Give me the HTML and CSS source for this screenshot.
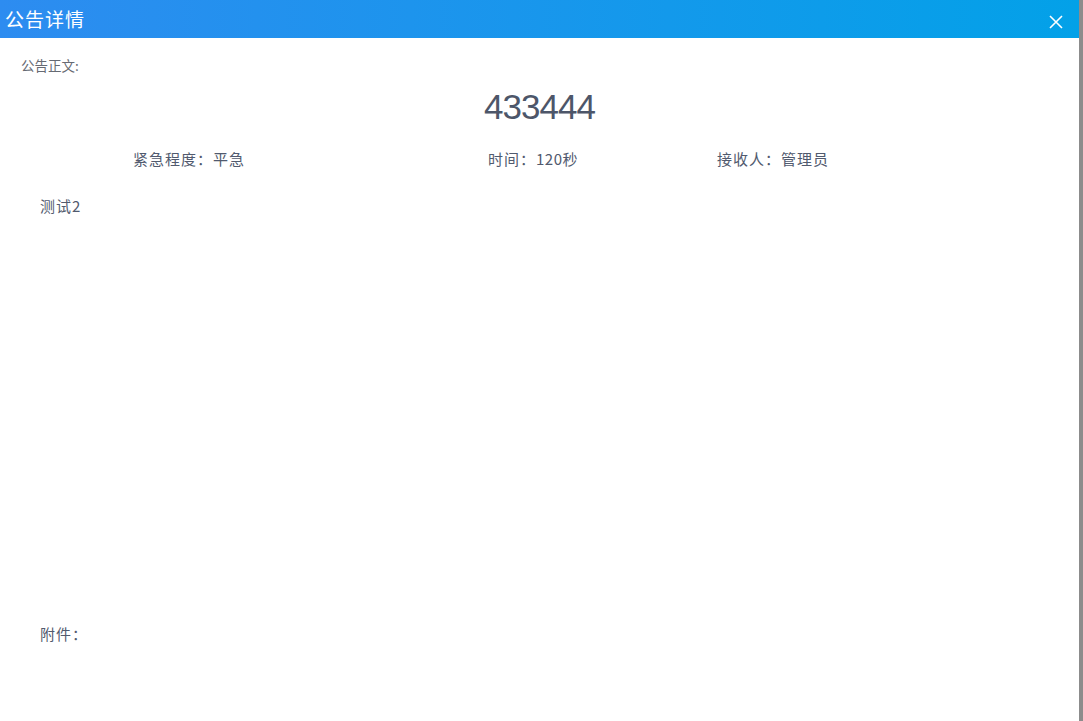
FILE: index.html
```html
<!DOCTYPE html>
<html lang="zh">
<head>
<meta charset="utf-8">
<link rel="stylesheet" href="styles.css">
</head>
<body>
<div class="modal">
  <div class="header">
    <span class="title">公告详情</span>
    <svg class="close" width="14" height="14" viewBox="0 0 14 14"><path d="M1 1L13 13M13 1L1 13" stroke="#fff" stroke-width="1.6" fill="none"/></svg>
  </div>
  <div class="body">
    <div class="label">公告正文:</div>
    <div class="headline">433444</div>
    <div class="meta">
      <span class="m1">紧急程度：平急</span>
      <span class="m2">时间：<span class="num">120</span>秒</span>
      <span class="m3">接收人：管理员</span>
    </div>
    <div class="content">测试2</div>
    <div class="attach">附件：</div>
  </div>
</div>
</body>
</html>
```
FILE: styles.css
```css
html, body { margin: 0; padding: 0; }
body {
  width: 1083px; height: 721px; overflow: hidden;
  background: #8c8c8c;
  font-family: "Noto Sans CJK SC", "Helvetica Neue", "Liberation Sans", sans-serif;
}
.modal { width: 1079px; height: 721px; background: #fff; }
.header {
  height: 38px;
  background: linear-gradient(90deg, #2d8cf0 0%, #03a1e8 100%);
  display: flex; align-items: center; justify-content: space-between;
  padding: 0 16px 0 5px;
}
.title { color: #fff; font-size: 19px; letter-spacing: 1px; line-height: 38px; }
.close { margin-top: 5px; }
.body { padding: 0; color: #515a6e; }
.label { font-size: 13.5px; color: #666a73; padding: 17px 0 0 21px; line-height: 20px; }
.headline {
  text-align: center; font-size: 35px; color: #4d5669; letter-spacing: -1px;
  font-family: "Liberation Sans", "Helvetica Neue", Arial, sans-serif;
  line-height: 40px; margin-top: 12px;
}
.meta { display: flex; font-size: 15px; letter-spacing: 1px; line-height: 20px; margin-top: 22px; }
.m1 { margin-left: 133px; width: 355px; }
.m2 { width: 229px; }
.num { letter-spacing: 0.5px; }
.content { font-size: 15px; letter-spacing: 1px; padding-left: 40px; margin-top: 27px; line-height: 20px; }
.attach { font-size: 15px; letter-spacing: 1px; padding-left: 40px; margin-top: 408px; line-height: 20px; }
```
